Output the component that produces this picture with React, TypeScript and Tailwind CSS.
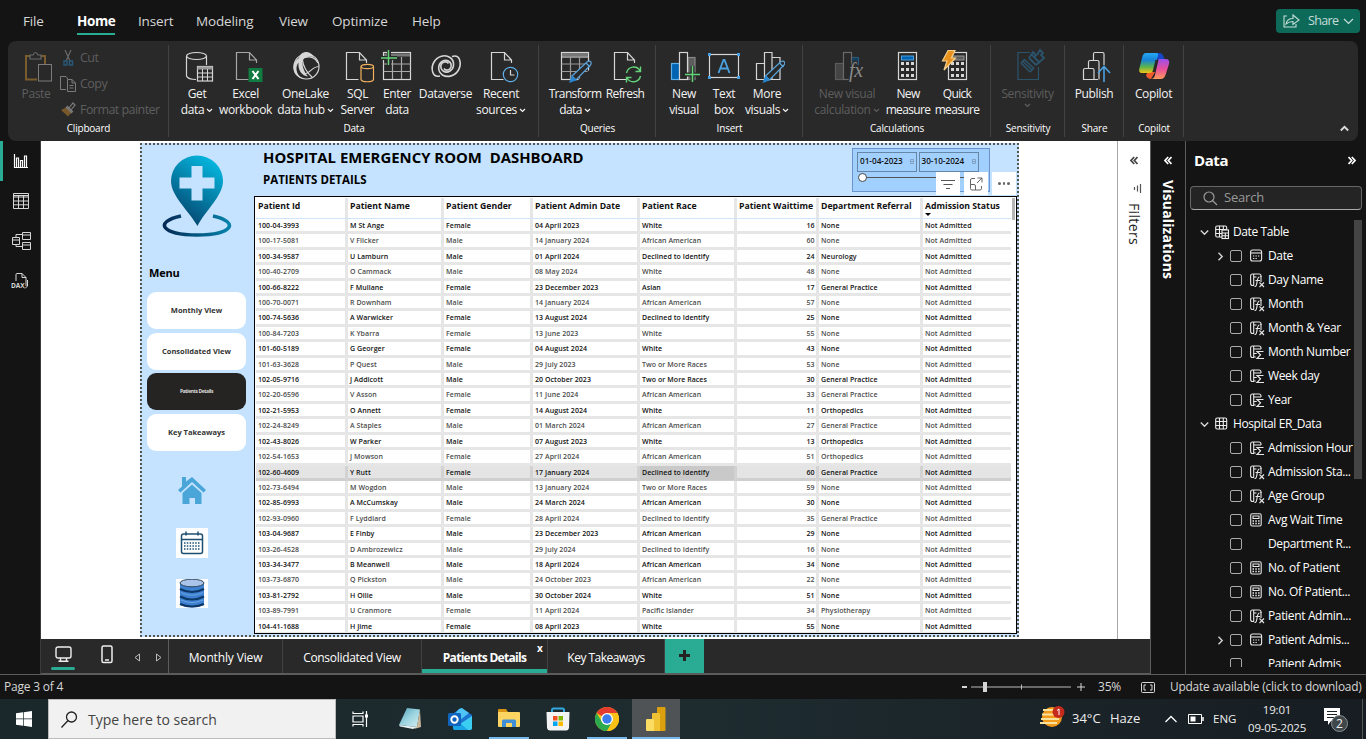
import React from 'react';

type Kids = { children?: React.ReactNode };

/* ---------- ribbon icons (36x36 canvas) ---------- */
const Svg36 = ({ children }: Kids) => (
  <svg width="36" height="36" viewBox="0 0 36 36" fill="none" stroke="#d6d6d6" strokeWidth="1.2" className="shrink-0">{children}</svg>
);
const PageShape = ({ x, color = '#d6d6d6' }: { x: number; color?: string }) => (
  <path stroke={color} d={`M${x + 20} 15V12L${x + 13} 4.5H${x}V31.5H${x + 12}M${x + 13} 4.5V12H${x + 20}`} />
);
const Pencil = ({ x }: { x: number }) => (
  <g transform={`translate(${x} 0)`}>
    <path stroke="#5aa5dc" fill="#292929" d="M2 28L17.5 13.5Q20 12.5 21 14Q21.500 16 20.500 17L6 32Z" />
    <path stroke="#5aa5dc" d="M16 15l4 4" />
    <path stroke="#2a86d0" fill="#2a86d0" d="M2 28.500L5.500 32L0 34Z" />
  </g>
);
const CalcShape = ({ x }: { x: number }) => (
  <g>
    <rect x={x + 0.5} y="4.500" width="18" height="27" />
    <g fill="#d6d6d6" stroke="none">
      {[14, 20, 26].map((y) => [3, 8, 13].map((dx) => <rect key={`${y}-${dx}`} x={x + dx} y={y} width="3" height="3" />))}
    </g>
  </g>
);

const GetDataIcon = () => (
  <Svg36>
    <ellipse cx="17.500" cy="8" rx="10" ry="3.500" />
    <path d="M7.500 8V28Q9 31.500 17 31.500M27.500 8V17" />
    <rect x="18.500" y="18.500" width="15" height="14.500" fill="#292929" />
    <path d="M18.500 20h15" strokeWidth="3" stroke="#9a9a9a" />
    <path d="M18.500 25h15M18.500 29h15M23.500 21v12M28.500 21v12" strokeWidth="1" />
  </Svg36>
);
const ExcelIcon = () => (
  <Svg36>
    <PageShape x={8.5} color="#a6a6a6" />
    <rect x="20.500" y="20" width="14" height="14" fill="#107c41" stroke="none" />
    <path stroke="#fff" strokeWidth="2" d="M24.500 23l6 8M30.500 23l-6 8" />
  </Svg36>
);
const OneLakeIcon = () => (
  <Svg36>
    <circle cx="18.500" cy="18.500" r="12.500" />
    <path fill="#d6d6d6" stroke="none" d="M11 10C13 2.500 22 2 26 9C21 7.500 17 9 15 12C13.500 17 16 24 20 28.500C14 28 9.500 22 10.500 14.500C7 19 8 26 14 30.500C4 28 2.500 15 11 10Z" />
    <path d="M14.500 12C15 18 19 25 24 29M17 26C22 25 24 19 30.500 18.500M17 9.500C22 7.500 28 10 30 15" />
  </Svg36>
);
const SqlIcon = () => (
  <Svg36>
    <PageShape x={6.5} />
    <path fill="#292929" stroke="#f2b05e" d="M21 19V31.500C22 34.500 32.500 34.500 33.500 31.500V19Z" />
    <ellipse cx="27.300" cy="18.500" rx="6.200" ry="2.200" stroke="#f2b05e" fill="#292929" />
  </Svg36>
);
const EnterDataIcon = () => (
  <Svg36>
    <rect x="4.500" y="4.500" width="27" height="27" />
    <path d="M5 7h26" stroke="#777" strokeWidth="3" />
    <path d="M4.500 16h27M4.500 23.500h27M13.500 9v22M22.500 9v22" stroke="#aaa" />
    <path d="M3 10h15M10 1v17" stroke="#292929" strokeWidth="4" />
    <path d="M2 10h16M9.500 2v15" stroke="#63d47a" strokeWidth="1.500" />
  </Svg36>
);
const DataverseIcon = () => (
  <Svg36>
    <g strokeWidth="1.600">
      <path d="M12 28C4 30 2.500 20 6 14C9.500 8 17 6 22 9.500C27 13 26.500 20 22 23C17 26 12 22 13 17C14 13.500 19 13 20.500 15.500" />
      <path d="M24 8.500C32 6 34 15 30.500 22C27 28 19.500 30 14.500 27C9.500 23.500 9.500 17 14 13.500C19 10.500 24 14 23 19C22 22.500 17.500 23 16 20.500" />
    </g>
  </Svg36>
);
const RecentIcon = () => (
  <Svg36>
    <PageShape x={8.5} />
    <circle cx="27.500" cy="26.500" r="7.200" stroke="#5fb0ea" fill="#292929" />
    <path d="M27.500 22v5h4" />
  </Svg36>
);
const TransformIcon = () => (
  <Svg36>
    <rect x="4.500" y="4.500" width="27" height="27" />
    <path d="M5 6.500h26" stroke="#777" strokeWidth="3" />
    <path d="M5 9h27" />
    <path d="M4.500 16h27M4.500 23.500h27M13.500 9v22M22.500 9v22" stroke="#999" />
    <path d="M22 32L33 22V33Z" fill="#292929" stroke="#292929" />
    <Pencil x={13} />
  </Svg36>
);
const RefreshIcon = () => (
  <Svg36>
    <PageShape x={7.5} />
    <circle cx="26.500" cy="26.500" r="8.500" fill="#292929" stroke="none" />
    <path stroke="#63d47a" strokeWidth="1.400" d="M19.500 25C21 18 30 17 33 23M33.500 18.500V23.500H28.500M33.500 28C32 35 23 35.500 20 30M19.500 34.500V29.500H24.500" />
  </Svg36>
);
const NewVisualIcon = () => (
  <Svg36>
    <rect x="5.500" y="15.500" width="8" height="16" fill="#0063b1" stroke="#5fb0ea" />
    <rect x="22" y="9.500" width="7" height="22" fill="#5c5c5c" stroke="#888" />
    <rect x="13.500" y="4.500" width="8" height="27" fill="#292929" />
    <path d="M18 26.500h16M26.500 18v17" stroke="#292929" strokeWidth="4" />
    <path d="M19 26.500h15M26.500 18v16" stroke="#63d47a" strokeWidth="1.500" />
  </Svg36>
);
const TextBoxIcon = () => (
  <Svg36>
    <rect x="3.500" y="6.500" width="29" height="23" />
    <path d="M12.500 25L17.500 12H18.500L23.500 25M14.300 20.500h7.500" stroke="#4ba0e0" strokeWidth="1.800" />
    <path d="M2 5h3v3H2zM31 5h3v3h-3zM2 28h3v3H2zM31 28h3v3h-3z" fill="#4ba0e0" stroke="none" />
  </Svg36>
);
const MoreVisualsIcon = () => (
  <Svg36>
    <path d="M7.500 31.500V15.500H15.500V31.500ZM15.500 31.500V4.500H23V31.500ZM23 9.500H31V31.500H23" />
    <Pencil x={14.5} />
  </Svg36>
);
const VisualCalcIcon = () => (
  <Svg36>
    <rect x="6.500" y="15.500" width="8" height="16" fill="#444" stroke="#5c5c5c" />
    <rect x="22" y="9.500" width="7.500" height="7" fill="#173c57" stroke="#295878" />
    <rect x="14.500" y="4.500" width="8" height="27" stroke="#6a6a6a" fill="#292929" />
    <text x="20" y="29" fill="#8a8a8a" stroke="#292929" strokeWidth="2" paintOrder="stroke" className="font-['Liberation_Serif',serif] text-[20px] italic">fx</text>
  </Svg36>
);
const NewMeasureIcon = () => (
  <Svg36>
    <CalcShape x={8} />
    <rect x="11.500" y="8" width="12" height="4" fill="#0063b1" stroke="#4ba0e0" strokeWidth="1" />
  </Svg36>
);
const QuickMeasureIcon = () => (
  <Svg36>
    <CalcShape x={9} />
    <rect x="13" y="8" width="12" height="4" fill="#5c5c5c" stroke="#999" strokeWidth="1" />
    <path d="M9 2.500H16L12.500 10H16.500L5 22L8 13H3.500Z" fill="#e8921d" stroke="#f7d08a" strokeWidth="1.200" />
  </Svg36>
);
const SensitivityIcon = () => (
  <Svg36>
    <g stroke="#2b536c">
      <path d="M20 4.500H8V31.500H28.500V19" />
      <path d="M11 15L20 24M12.500 13L22 22M14.500 11.500L24 20.500M11 15l3.500-3.500M20 24l4-4" strokeWidth="1.600" />
      <path d="M19 10l7 7M21 6l9 9M19 10l4-6 3 3-2 3M26 17l8-7-3-3 2-2-3-3-3 5" strokeWidth="1.800" />
    </g>
  </Svg36>
);
const PublishIcon = () => (
  <Svg36>
    <path d="M22 31.500H7.500V22Q7.500 20.500 9 20.500H16.500Q18 20.500 18 22V31.500M12.500 20V14Q12.500 12.500 14 12.500H21.500Q23 12.500 23 14V31.500M17.500 12V6Q17.500 4.500 19 4.500H26.500Q28 4.500 28 6V17" />
    <path d="M28 34V19M22 25L28 18.500L34 25" stroke="#4ba0e0" strokeWidth="1.600" />
  </Svg36>
);
const CopilotIcon = () => (
  <Svg36>
    <defs>
      <linearGradient id="cpA" x1="0" y1="0" x2="0" y2="1"><stop offset="0" stopColor="#25a9f4" /><stop offset=".35" stopColor="#1783d8" /><stop offset=".7" stopColor="#5cb54c" /><stop offset="1" stopColor="#f6c416" /></linearGradient>
      <linearGradient id="cpB" x1="0" y1="0" x2="0" y2="1"><stop offset="0" stopColor="#9a4fea" /><stop offset=".5" stopColor="#e94f9c" /><stop offset="1" stopColor="#fb9a5a" /></linearGradient>
    </defs>
    <g stroke="none">
      <path d="M18 5H24Q27 5.500 28 10L29 12H22Z" fill="#1547c8" />
      <path d="M12 24H19L15 31Q11 31 10 27Z" fill="#ee5a2c" />
      <path d="M10 5H20Q23 5 22 8L18 21Q17 25 13 25H6Q2 25 3.500 20L6 10Q7 5 10 5Z" fill="url(#cpA)" />
      <path d="M23 11H30Q34 11 33 16L29.500 27Q28 31 25 31H15Q18 31 19 27L22 14Q22.500 11 23 11Z" fill="url(#cpB)" />
      <path d="M19.500 12H22L18.500 24H16.500Z" fill="#292929" />
    </g>
  </Svg36>
);

const Caret = ({ className = '' }: { className?: string }) => (
  <svg width="7" height="5" viewBox="0 0 7 5" fill="none" stroke="currentColor" strokeWidth="1.200" className={`inline-block ${className}`}><path d="M1 1l2.500 2.500L6 1" /></svg>
);

type BtnProps = { icon: React.ReactNode; a: string; b?: string; caret?: boolean; w: string; off?: boolean; tight?: boolean };
const Btn = ({ icon, a, b, caret, w, off, tight }: BtnProps) => (
  <div className={`flex ${w} shrink-0 flex-col items-center ${tight ? 'tracking-[-0.650px]' : 'tracking-[-0.350px]'} ${off ? 'text-[#5e5e5e]' : 'text-[#f3f3f3]'}`}>
    {icon}
    <span className="mt-[1.500px] whitespace-nowrap text-[12px] leading-4">{a}</span>
    <span className="flex items-center gap-[2px] whitespace-nowrap text-[12px] leading-4">{b}{caret && <Caret className="mt-px" />}</span>
  </div>
);
const Group = ({ w, label, pad = '', children }: { w: string; label: string; pad?: string } & Kids) => (
  <div className={`relative flex h-full ${w} shrink-0 flex-col`}>
    <div className={`flex h-[76px] pt-[7px] ${pad}`}>{children}</div>
    <div className="mt-[3px] text-center text-[10px] font-medium leading-4 tracking-[-0.200px] text-white">{label}</div>
    <div className="absolute right-0 top-1 h-[92px] w-px bg-[#424242]" />
  </div>
);

const Ribbon = () => (
  <div className="mx-2 flex h-[100px] w-[1350px] shrink-0 rounded-lg bg-[#292929]">
    <Group w="w-[161px]" label="Clipboard" pad="pl-3">
      <div className="flex w-8 flex-col items-center text-[#5e5e5e]">
        <svg width="32" height="36" viewBox="0 0 32 36" fill="none">
          <path d="M10 8H6V31.500H17M21 8h4v8" stroke="#7b5c2c" strokeWidth="2" />
          <path d="M10 11V7H13Q15.500 2 18 7H21V11Z" stroke="#6a6a6a" strokeWidth="1.200" fill="#292929" />
          <rect x="18.500" y="16.500" width="13" height="16.500" stroke="#7b7b7b" fill="#292929" />
        </svg>
        <span className="mt-[1.500px] text-[12px] leading-4 tracking-[-0.350px]">Paste</span>
      </div>
      <div className="-mt-[3px] ml-2 flex shrink-0 flex-col text-[12.500px] tracking-[-0.550px] text-[#5e5e5e]">
        <div className="flex h-[26px] shrink-0 items-center gap-1">
          <svg width="16" height="18" viewBox="0 0 16 18" fill="none"><path d="M5 1l5 11M11 1L6 12" stroke="#6a6a6a" strokeWidth="1.200" /><path d="M4 12h3v4H4zM9.500 12h3v4h-3z" stroke="#295878" strokeWidth="1.500" /></svg>
          Cut
        </div>
        <div className="flex h-[26px] shrink-0 items-center gap-1">
          <svg width="16" height="18" viewBox="0 0 16 18" fill="none" stroke="#7b7b7b"><path d="M6 14.500H.5V1.500H6L8 4M7.500 4.500H12L15.500 8V16.500H7.500ZM12 4.500V8H15.500M9.500 10.500h4M9.500 13h4" /></svg>
          Copy
        </div>
        <div className="flex h-[26px] shrink-0 items-center gap-1">
          <svg width="16" height="18" viewBox="0 0 16 18" fill="none"><path d="M1 9L7 6L12 11L8 15.500Z" fill="#76582b" /><path d="M6 6l6 6M7 5l6 6M9 7l4-5 2 2-4 5" stroke="#7b7b7b" strokeWidth="1.200" /></svg>
          <span className="whitespace-nowrap">Format painter</span>
        </div>
      </div>
    </Group>
    <Group w="w-[370px]" label="Data" pad="pl-[7px]">
      <Btn w="w-[42px]" icon={<GetDataIcon />} a="Get" b="data" caret />
      <Btn w="w-[55px]" icon={<ExcelIcon />} a="Excel" b="workbook" />
      <Btn w="w-[65px]" icon={<OneLakeIcon />} a="OneLake" b="data hub" caret />
      <Btn w="w-[39px]" icon={<SqlIcon />} a="SQL" b="Server" />
      <Btn w="w-10" icon={<EnterDataIcon />} a="Enter" b="data" />
      <Btn w="w-[57px]" icon={<DataverseIcon />} a="Dataverse" />
      <Btn w="w-[54px]" icon={<RecentIcon />} a="Recent" b="sources" caret />
    </Group>
    <Group w="w-[117px]" label="Queries" pad="pl-[6px]">
      <Btn w="w-[60px]" icon={<TransformIcon />} a="Transform" b="data" caret tight />
      <Btn w="w-10" icon={<RefreshIcon />} a="Refresh" tight />
    </Group>
    <Group w="w-[147px]" label="Insert" pad="pl-2">
      <Btn w="w-10" icon={<NewVisualIcon />} a="New" b="visual" />
      <Btn w="w-10" icon={<TextBoxIcon />} a="Text" b="box" />
      <Btn w="w-[46px]" icon={<MoreVisualsIcon />} a="More" b="visuals" caret />
    </Group>
    <Group w="w-[188px]" label="Calculations" pad="pl-2">
      <Btn w="w-[72px]" icon={<VisualCalcIcon />} a="New visual" b="calculation" caret off />
      <Btn w="w-[50px]" icon={<NewMeasureIcon />} a="New" b="measure" tight />
      <Btn w="w-12" icon={<QuickMeasureIcon />} a="Quick" b="measure" tight />
    </Group>
    <Group w="w-[74px]" label="Sensitivity"><Btn w="w-[73px]" icon={<SensitivityIcon />} a="Sensitivity" b="" caret off /></Group>
    <Group w="w-[59px]" label="Share"><Btn w="w-[58px]" icon={<PublishIcon />} a="Publish" /></Group>
    <Group w="w-[60px]" label="Copilot"><Btn w="w-[59px]" icon={<CopilotIcon />} a="Copilot" /></Group>
    <div className="flex flex-1 items-end justify-end pb-[9px] pr-[9px]">
      <svg width="9" height="7" viewBox="0 0 9 7" fill="none" stroke="#ddd" strokeWidth="1.800"><path d="M.8 5.500L4.500 1.800L8.200 5.500" /></svg>
    </div>
  </div>
);

const menus: [string, string][] = [
  ['File', 'w-[54px]'], ['Home', 'w-[61px]'], ['Insert', 'w-[58px]'], ['Modeling', 'w-[83px]'], ['View', 'w-[53px]'], ['Optimize', 'w-[80px]'], ['Help', 'w-12'],
];
const MenuBar = () => (
  <div className="flex h-[41px] shrink-0 items-start justify-between pl-[23px] pr-[6px] text-[13.500px] text-[#d6d6d6]">
    <div className="flex pt-[11px]">
      {menus.map(([m, w]) => (
        <div key={m} className={`${w} flex flex-col items-start leading-5`}>
          {m === 'Home'
            ? <span className="flex h-6 flex-col border-b-2 border-[#2aac94] font-bold tracking-[-0.400px] text-white">{m}</span>
            : <span className="tracking-[-0.150px]">{m}</span>}
        </div>
      ))}
    </div>
    <div className="mt-[9px] flex h-6 w-[84px] items-center rounded bg-[#0d6a58] pl-[7px] text-[12.500px] text-[#c5ddd8]">
      <svg width="17" height="16" viewBox="0 0 17 16" fill="none" stroke="#c5ddd8" strokeWidth="1.100"><path d="M4 3H1V14H13V11M3 11Q4 5.500 10 5.500V2L16 7L10 11.500V8.500Q6 8.500 3 11Z" /></svg>
      <span className="ml-2 tracking-[-0.650px]">Share</span>
      <svg width="11" height="7" viewBox="0 0 11 7" fill="none" stroke="#c5ddd8" strokeWidth="1.200" className="ml-[5px]"><path d="M1 1l4.500 4.500L10 1" /></svg>
    </div>
  </div>
);

const LeftRail = () => (
  <div className="flex h-full w-[41px] shrink-0 flex-col border-r border-[#3b3b3b] bg-[#141414] text-[#d8d8d8]">
    <div className="flex h-10 items-center border-l-[3px] border-[#2aac94] pl-[10px]">
      <svg width="16" height="16" viewBox="0 0 16 16" fill="none" stroke="#fff" strokeWidth="1.200"><path d="M1.500 1V14.500H15M3.500 14V5h2v9M7.500 14V7.500h2V14M11.500 14V3h2V14" /></svg>
    </div>
    <div className="flex h-10 items-center pl-[13px]">
      <svg width="16" height="16" viewBox="0 0 16 16" fill="none" stroke="currentColor"><path d="M.5.500h15v15H.5zM.5 4h15M.5 8h15M.5 11.800h15M5.500 3v12M10.500 3v12M.5 2.500h15" /></svg>
    </div>
    <div className="flex h-10 items-center pb-px pl-3">
      <svg width="19" height="19" viewBox="0 0 19 19" fill="none" stroke="currentColor"><path d="M.5 6.500h7v7h-7zM.5 9h7M10.500 1.500h8v7h-8zM10.500 4h8M10.500 11.500h8v7h-8zM10.500 14h8M4 6V3.500h6.500M4 14v1.500h6.500" /></svg>
    </div>
    <div className="flex h-10 items-center pl-[11px]">
      <svg width="19" height="19" viewBox="0 0 19 19" fill="none" stroke="currentColor">
        <path d="M5 9V2.500Q5 1.500 6 1.500H11L15 5.500V14M11 1.500V5.500H15M16.500 8V14L14 16.500" />
        <text x="0" y="16" fill="currentColor" stroke="none" className="text-[6.500px] font-bold">DAX</text>
      </svg>
    </div>
  </div>
);

const rows: string[][] = `100-04-3993|M St Ange|Female|04 April 2023|White|16|None
100-17-5081|V Flicker|Male|14 January 2024|African American|60|None
100-34-9587|U Lamburn|Male|01 April 2024|Declined to Identify|24|Neurology
100-40-2709|O Cammack|Male|08 May 2024|White|48|None
100-66-8222|F Mullane|Female|23 December 2023|Asian|17|General Practice
100-70-0071|R Downham|Male|14 January 2024|African American|57|None
100-74-5636|A Warwicker|Female|13 August 2024|Declined to Identify|25|None
100-84-7203|K Ybarra|Female|13 June 2023|White|55|None
101-60-5189|G Georger|Female|04 August 2024|White|43|None
101-63-3628|P Quest|Male|29 July 2023|Two or More Races|53|None
102-05-9716|J Addicott|Male|20 October 2023|Two or More Races|30|General Practice
102-20-6596|V Asson|Female|11 June 2024|African American|33|General Practice
102-21-5953|O Annett|Female|14 August 2024|White|11|Orthopedics
102-24-8249|A Staples|Male|01 March 2024|African American|27|General Practice
102-43-8026|W Parker|Male|07 August 2023|White|13|Orthopedics
102-54-1653|J Mowson|Female|27 April 2024|African American|51|Orthopedics
102-60-4609|Y Rutt|Female|17 January 2024|Declined to Identify|60|General Practice
102-73-6494|M Wogdon|Male|13 January 2024|Two or More Races|59|None
102-85-6993|A McCumskay|Male|24 March 2024|African American|30|None
102-93-0960|F Lyddiard|Female|28 April 2024|Declined to Identify|35|General Practice
103-04-9687|E Finby|Male|23 December 2023|African American|29|None
103-26-4528|D Ambrozewicz|Male|29 July 2024|Declined to Identify|16|None
103-34-3477|B Meanwell|Male|18 April 2024|African American|34|None
103-73-6870|Q Pickston|Male|24 October 2023|African American|22|None
103-81-2792|H Ollie|Male|30 October 2024|White|51|None
103-89-7991|U Cranmore|Female|11 April 2024|Pacific Islander|34|Physiotherapy
104-41-1688|H Jime|Female|08 April 2023|White|55|None`.split('\n').map((r) => [...r.split('|'), 'Not Admitted']);

const headers = ['Patient Id', 'Patient Name', 'Patient Gender', 'Patient Admin Date', 'Patient Race', 'Patient Waittime', 'Department Referral', 'Admission Status'];
const COLS = 'grid grid-cols-[92px_96px_89px_107px_97px_82px_104px_88px]';

const PatientTable = () => (
  <div className="relative h-[438px] w-[763px] overflow-hidden border border-black bg-white pl-px">
    <div className={`${COLS} h-[22px] w-[755px] border-b border-[#cfe5fa] pt-px`}>
      {headers.map((h, i) => (
        <div key={h} className={`relative whitespace-nowrap pl-[2px] pt-[3px] text-[8.700px] font-bold leading-[11px] text-[#111] ${i < 7 ? 'border-r-[3px] border-[#e6e6e6]' : ''}`}>
          {h}
          {i === 7 && <div className="absolute left-[2px] top-[15px] border-x-[3px] border-t-[3px] border-x-transparent border-t-black" />}
        </div>
      ))}
    </div>
    {rows.map((r, ri) => (
      <div key={r[0]} className={`${COLS} h-[15.420px] w-[755px] ${ri === 16 ? 'border-b-[3px] border-[#cfcfcf] bg-[#e4e4e4]' : 'border-b-[3px] border-[#e6e6e6]'}`}>
        {r.map((c, ci) => (
          <div
            key={ci}
            className={`whitespace-nowrap pl-[2px] text-[7px] font-semibold leading-[14px] tracking-[0.060px] ${ri % 2 ? 'text-[#4c4c4c]' : 'text-[#111]'} ${ci < 7 ? 'border-r-[3px]' : ''} ${ri === 16 ? 'border-[#d2d2d2]' : 'border-[#e6e6e6]'} ${ri === 16 && ci === 4 ? 'bg-[#c9c9c9]' : ''} ${ci === 5 ? 'pr-[1.500px] text-right' : ''}`}
          >
            {c}
          </div>
        ))}
      </div>
    ))}
    <div className="absolute right-px top-px h-[22px] w-[3px] bg-[#b5b5b5]" />
  </div>
);

const NavButton = ({ label, active }: { label: string; active?: boolean }) => (
  <div className={`flex h-[37px] w-[99px] items-center justify-center rounded-[9px] ${active ? 'bg-[#252423]' : 'bg-white'}`}>
    <span className={active ? 'text-[5px] font-bold tracking-[-0.400px] text-[#ddd]' : 'text-[7.500px] font-bold text-[#333]'}>{label}</span>
  </div>
);

const SideNav = () => (
  <div className="flex w-[112px] shrink-0 flex-col pl-[5px]">
    <svg width="72" height="86" viewBox="0 0 72 86" className="ml-[14px] mt-2" fill="none">
      <defs>
        <linearGradient id="pin" x1=".8" y1="0" x2=".3" y2="1"><stop offset="0" stopColor="#06bce4" /><stop offset=".5" stopColor="#0480a8" /><stop offset="1" stopColor="#05426c" /></linearGradient>
        <linearGradient id="ring" x1="0" y1="0" x2="1" y2="0"><stop offset="0" stopColor="#052a55" /><stop offset="1" stopColor="#0683ab" /></linearGradient>
      </defs>
      <path d="M36.500 73C28 58 10 43 10 28A26 25.500 0 0 1 62 28C62 43 44 58 36.500 73Z" fill="url(#pin)" />
      <path d="M30.500 13h11v11.500h12v11h-12v12h-11v-12h-12v-11h12z" fill="#c5e3ff" />
      <path d="M20 63C-8 69 1 82 36 82C72 82 79 69 52 63" stroke="url(#ring)" strokeWidth="3.500" />
    </svg>
    <div className="ml-[2px] mt-[26px] text-[11px] font-bold leading-4 tracking-[-0.200px] text-black">Menu</div>
    <div className="mt-[11px] flex flex-col gap-[3.700px]">
      <NavButton label="Monthly View" />
      <NavButton label="Consolidated View" />
      <NavButton label="Patients Details" active />
      <NavButton label="Key Takeaways" />
    </div>
    <svg width="28" height="28" viewBox="0 0 28 28" className="ml-[31px] mt-[26px]"><path d="M4 0H8V4.500L14 0L28 13L25.500 15.500L14 5L2.500 15.500L0 13L4 9.500Z" fill="#4aa6d9" /><path d="M4.500 16L14 7.500L23.500 16V27H17V21H11.500V27H4.500Z" fill="#4aa6d9" /></svg>
    <div className="ml-[29px] mt-[23px] flex h-[30px] w-8 items-center justify-center bg-white">
      <svg width="24" height="24" viewBox="0 0 24 24" fill="none" stroke="#1d4f72" strokeWidth="1.500"><rect x="1.500" y="3" width="21" height="19.500" rx="2" /><path d="M1.500 8.500h21M6 .5v4M18 .5v4" /><path d="M4 12h16M4 15h16M4 18h16" strokeDasharray="1.500 1.300" /></svg>
    </div>
    <div className="ml-[29px] mt-[21px] flex h-[29px] w-8 justify-center bg-white">
      <svg width="26" height="29" viewBox="0 0 26 29" fill="none"><path d="M1 4H25V26Q13 31 1 26Z" fill="#3d80cf" /><path d="M1 10Q13 16 25 10M1 17.500Q13 23.500 25 17.500M1 25Q13 30 25 25" stroke="#0d3767" strokeWidth="2.200" /><ellipse cx="13" cy="4" rx="12" ry="3.800" fill="#a9c4e8" stroke="#31465e" /><path d="M2 13.500Q13 19 24 13.500M2 21Q13 26 24 21" stroke="#6aa4e6" /></svg>
    </div>
  </div>
);

const DateBox = ({ v }: { v: string }) => (
  <div className="flex h-5 w-[60px] items-center justify-between border border-[#6586a6] pl-[2px] pr-[2px] text-[8.200px] font-semibold text-[#111]">
    <span>{v}</span>
    <svg width="4" height="5" viewBox="0 0 4 5" fill="none" stroke="#7d9dbd" strokeWidth="0.900"><path d="M.5.500h3v4h-3zM.5 2.500h3" /></svg>
  </div>
);

const DateSlicer = () => (
  <div className="relative h-[44px] w-[138px] border border-[#6c93cf] bg-[#a1d0ff] pl-1 pt-[2.500px]">
    <div className="flex gap-[1.500px]"><DateBox v="01-04-2023" /><DateBox v="30-10-2024" /></div>
    <div className="absolute left-[9px] top-[28px] h-px w-[112px] bg-[#555]" />
    <div className="absolute left-[5px] top-[24px] h-[9px] w-[9px] rounded-full border border-[#444] bg-white" />
    <div className="absolute left-[83px] top-[23px] flex gap-1">
      <div className="flex h-[23px] w-6 items-center justify-center bg-white"><svg width="14" height="10" viewBox="0 0 14 10" stroke="#555"><path d="M0 1.500h14M2.500 5.500h9M5 9.500h4" /></svg></div>
      <div className="flex h-[23px] w-6 items-center justify-center bg-white"><svg width="14" height="14" viewBox="0 0 14 14" fill="none" stroke="#666"><path d="M6 1.500H3Q1.500 1.500 1.500 3V11.500Q1.500 13 3 13H11Q12.500 13 12.500 11.500V9M8.500 1h4.500v4.500M13 1L8 6M1.500 7.500H5Q6.500 7.500 6.500 9V13" /></svg></div>
      <div className="flex h-[23px] w-6 items-center justify-center gap-[2px] bg-white"><i className="h-[2.500px] w-[2.500px] rounded-full bg-[#666]" /><i className="h-[2.500px] w-[2.500px] rounded-full bg-[#666]" /><i className="h-[2.500px] w-[2.500px] rounded-full bg-[#666]" /></div>
    </div>
  </div>
);

const ReportPage = () => (
  <div className="ml-[99px] mt-[2px] flex h-[494px] w-[879px] border-2 border-dotted border-[#555] bg-[#c5e3ff]">
    <SideNav />
    <div className="flex flex-1 flex-col">
      <div className="flex h-[51px] justify-between pl-[9px] pr-[27px] text-black">
        <div className="pt-[2px]">
          <div className="whitespace-pre text-[14.900px] font-bold leading-5">HOSPITAL EMERGENCY ROOM  DASHBOARD</div>
          <div className="mt-[5px] text-[11.500px] font-bold leading-4">PATIENTS DETAILS</div>
        </div>
        <div className="z-10 pt-[3px]"><DateSlicer /></div>
      </div>
      <PatientTable />
    </div>
  </div>
);

const PageTabs = () => (
  <div className="flex h-[35px] shrink-0 border-b border-[#5c5c5c] bg-[#292929] text-[12px] tracking-[-0.150px] text-white">
    <div className="flex w-[128px] shrink-0 border-r border-[#5c5c5c]">
      <div className="flex w-[44px] flex-col items-center pt-[7px]">
        <svg width="17" height="17" viewBox="0 0 17 17" fill="none" stroke="#eee" strokeWidth="1.400"><rect x="1" y="1" width="15" height="11" rx="2" /><path d="M5.500 12v3M11.500 12v3M3.500 15.300h10" /></svg>
        <div className="mt-1 h-[3px] w-6 rounded bg-[#2aac94]" />
      </div>
      <svg width="12" height="19" viewBox="0 0 12 19" fill="none" stroke="#eee" strokeWidth="1.500" className="ml-4 mt-[6px]"><rect x="1" y="1" width="10" height="16.500" rx="1.500" /><path d="M4 15h4" /></svg>
      <svg width="6" height="9" viewBox="0 0 6 9" fill="none" stroke="#bbb" className="ml-[21px] mt-[14px]"><path d="M5.500 1v7L1 4.500Z" /></svg>
      <svg width="6" height="9" viewBox="0 0 6 9" fill="none" stroke="#bbb" className="ml-4 mt-[14px]"><path d="M.5 1v7L5 4.500Z" /></svg>
    </div>
    <div className="flex w-[114px] shrink-0 items-center justify-center border-r border-[#424242] pt-[3px]">Monthly View</div>
    <div className="flex w-[139px] shrink-0 items-center justify-center border-r border-[#424242] pt-[3px] tracking-[-0.300px]">Consolidated View</div>
    <div className="relative flex w-[125px] shrink-0 items-center justify-center border-b-4 border-[#2aac94] pt-[7px] font-bold tracking-[-0.700px]">
      Patients Details
      <span className="absolute right-[5px] top-[3px] text-[10px] leading-3">x</span>
    </div>
    <div className="flex w-[118px] shrink-0 items-center justify-center border-x border-[#424242] pt-[3px] tracking-[-0.500px]">Key Takeaways</div>
    <div className="flex w-[39px] shrink-0 items-center justify-center bg-[#2aac94] pb-px">
      <svg width="11" height="11" viewBox="0 0 11 11" stroke="#252423" strokeWidth="3"><path d="M5.500 0v11M0 5.500h11" /></svg>
    </div>
  </div>
);

const Dbl = ({ color, right }: { color: string; right?: boolean }) => (
  <svg width="8" height="9" viewBox="0 0 8 9" fill="none" stroke={color} strokeWidth="1.700" className={right ? 'rotate-180' : ''}><path d="M4.200 1L1 4.500L4.200 8M7.500 1L4.300 4.500L7.500 8" /></svg>
);

const FiltersPane = () => (
  <div className="flex h-[498px] w-[33px] flex-col items-center border-l border-[#a8a8a8] bg-white pt-[15px]">
    <Dbl color="#444" />
    <svg width="9" height="9" viewBox="0 0 9 9" fill="none" stroke="#555" strokeWidth="1.200" className="ml-[7px] mt-[19px] shrink-0"><path d="M7.500 0v9M4.500 1.500v6M1.500 3v3" /></svg>
    <div className="mt-[10px] text-[14px] font-medium leading-5 tracking-[0.350px] text-[#252423] [writing-mode:vertical-rl]">Filters</div>
  </div>
);

const VizPane = () => (
  <div className="flex h-full w-9 shrink-0 flex-col items-center border-x border-[#5c5c5c] bg-[#141414] pt-[15px] text-white">
    <Dbl color="#fff" />
    <div className="mt-[15px] whitespace-nowrap text-[14px] font-bold leading-5 tracking-[0.150px] [writing-mode:vertical-rl]">Visualizations</div>
  </div>
);

type FieldKind = 'date' | 'fx' | 'sum' | 'calc' | 'none';
const FieldIcon = ({ kind }: { kind: FieldKind }) => (
  <svg width="15" height="15" viewBox="0 0 15 15" fill="none" stroke="#e8e8e8" strokeWidth="1.100" className="shrink-0">
    {kind === 'date' && <><rect x=".6" y="1" width="11" height="11" rx="2" /><path d="M.6 4h11" /><path d="M3 7h6.500M3 9.500h4.500" strokeDasharray="1.300 1.200" /></>}
    {kind === 'calc' && <><rect x=".7" y=".7" width="10.500" height="12.300" rx="1.500" /><path d="M3 3h6v2.500H3z" /><path d="M2.500 8h7.500M2.500 10.500h7.500" strokeDasharray="1.500 1.300" strokeWidth="1.500" /></>}
    {(kind === 'fx' || kind === 'sum') && <path d="M4 12.500H2.500Q.6 12.500 .6 10.500V3Q.6 1 2.500 1H9Q11 1 11 3V4M3.700 1V12.500" />}
    {kind === 'fx' && <path d="M3.700 4H6.500M11 3V9M4.500 13.500C8 14.500 6 4 9.500 4M5.500 7.500h4.500M9.500 9.500l4.500 4.500M14 9.500l-4.500 4.500" />}
    {kind === 'sum' && <path d="M3.700 4h7.300M13.500 6.500H7L10.500 9.800L7 13.500H14M3.700 8.500h3M3.700 12h2" strokeWidth="1.200" />}
  </svg>
);
const TreeCaret = ({ open }: { open?: boolean }) => (
  <svg width="9" height="9" viewBox="0 0 9 9" fill="none" stroke="#d6d6d6" strokeWidth="1.400" className="shrink-0"><path d={open ? 'M.8 2.500L4.500 6.200L8.200 2.500' : 'M2.500.8L6.200 4.500L2.500 8.200'} /></svg>
);
const TableRow = ({ label, dbl }: { label: string; dbl?: boolean }) => (
  <div className="flex h-6 shrink-0 items-center pl-[14px]">
    <TreeCaret open />
    <svg width="15" height="15" viewBox="0 0 15 15" fill="none" stroke="#eee" strokeWidth="1.100" className="ml-[6px]">
      <rect x=".7" y="1" width="11" height="11" rx="1.500" /><path d="M.7 4.500h11M.7 8.500h11M4.500 1v11M8.300 1v11" />
      {dbl && <><rect x="7" y="5" width="6.500" height="8.500" fill="#141414" /><path d="M7 8h6.500M7 10.800h6.500M10.300 8v5.500" /></>}
    </svg>
    <span className="ml-[3px] tracking-[-0.400px]">{label}</span>
  </div>
);
const FieldRow = ({ label, kind, open }: { label: string; kind: FieldKind; open?: boolean }) => (
  <div className="flex h-6 shrink-0 items-center pl-[30px]">
    {open ? <TreeCaret /> : <span className="w-[9px]" />}
    <span className="ml-[5px] h-3 w-3 shrink-0 rounded-[2px] border border-[#aaa]" />
    <span className="ml-2 w-[18px]"><FieldIcon kind={kind} /></span>
    <span className="whitespace-nowrap">{label}</span>
  </div>
);

const DataPane = () => (
  <div className="flex h-full flex-1 flex-col text-white">
    <div className="flex h-[45px] items-center justify-between pb-[6px] pl-2 pr-[10px]">
      <span className="text-[15px] font-bold tracking-[-0.400px]">Data</span><Dbl color="#fff" right />
    </div>
    <div className="ml-1 flex h-6 w-[172px] items-center rounded border border-[#666] border-b-[#aaa] bg-[#242424] text-[13px] text-[#9a9a9a]">
      <svg width="15" height="15" viewBox="0 0 15 15" fill="none" stroke="#9a9a9a" strokeWidth="1.200" className="ml-3 mr-[6px]"><circle cx="6" cy="6" r="5" /><path d="M9.500 9.500L14 14" /></svg>
      <span className="tracking-[-0.200px]">Search</span>
    </div>
    <div className="relative mt-[10px] flex h-[447px] flex-col overflow-hidden text-[12px] tracking-[-0.350px]">
      <TableRow label="Date Table" dbl />
      <FieldRow label="Date" kind="date" open />
      <FieldRow label="Day Name" kind="fx" />
      <FieldRow label="Month" kind="fx" />
      <FieldRow label="Month & Year" kind="fx" />
      <FieldRow label="Month Number" kind="sum" />
      <FieldRow label="Week day" kind="sum" />
      <FieldRow label="Year" kind="sum" />
      <TableRow label="Hospital ER_Data" />
      <FieldRow label="Admission Hour" kind="sum" />
      <FieldRow label="Admission Sta..." kind="fx" />
      <FieldRow label="Age Group" kind="fx" />
      <FieldRow label="Avg Wait Time" kind="calc" />
      <FieldRow label="Department R..." kind="none" />
      <FieldRow label="No. of Patient" kind="calc" />
      <FieldRow label="No. Of Patient..." kind="calc" />
      <FieldRow label="Patient Admin..." kind="fx" />
      <FieldRow label="Patient Admis..." kind="date" open />
      <FieldRow label="Patient Admis" kind="none" />
      <div className="absolute right-1 top-0 h-[259px] w-2 bg-[#444]" />
    </div>
  </div>
);

const StatusBar = () => (
  <div className="flex h-6 shrink-0 items-center justify-between bg-[#141414] pl-1 pr-[5px] text-[12px] tracking-[-0.200px] text-[#d6d6d6]">
    <span>Page 3 of 4</span>
    <div className="flex items-center">
      <span className="h-[2px] w-[5px] bg-[#d6d6d6]" />
      <svg width="101" height="12" viewBox="0 0 101 12" stroke="#bbb" className="ml-1"><path d="M0 6h100M50.500 3.500v5" /><rect x="12" y="1" width="4" height="10" fill="#d6d6d6" stroke="none" /></svg>
      <svg width="8" height="8" viewBox="0 0 8 8" stroke="#d6d6d6" className="ml-[5px]"><path d="M4 0v8M0 4h8" /></svg>
      <span className="ml-[13px] w-[43px]">35%</span>
      <svg width="14" height="11" viewBox="0 0 14 11" fill="none" stroke="#d6d6d6"><rect x=".5" y=".5" width="13" height="10" rx="1" /><path d="M5 3H3v5h2M9 3h2v5H9" /></svg>
      <span className="ml-[15px] w-[191px] whitespace-nowrap text-[11.900px] tracking-[-0.200px]">Update available (click to download)</span>
    </div>
  </div>
);

const Slot = ({ w, line, active, children }: { w: string; line?: boolean; active?: boolean } & Kids) => (
  <div className={`relative flex h-full ${w} shrink-0 items-center justify-center ${active ? 'bg-[#505355]' : ''}`}>
    {children}
    {line && <div className={`absolute bottom-0 h-[2px] bg-[#76b9ed] ${active ? 'w-12' : 'w-10'}`} />}
  </div>
);

const Taskbar = () => (
  <div className="flex h-10 shrink-0 bg-linear-to-r from-[#1a282c] via-[#1e2c30] to-[#171d22] text-white">
    <Slot w="w-12"><svg width="16" height="16" viewBox="0 0 16 16" fill="#fff"><path d="M0 2.300L7 1.300V7.600H0zM7.700 1.200L16 0V7.600H7.700zM0 8.300H7V14.700L0 13.700zM7.700 8.300H16V16L7.700 14.800z" /></svg></Slot>
    <div className="flex h-full w-72 items-center border border-[#bbb] bg-[#f1f1f1] pl-3 text-[14px] text-[#444]">
      <svg width="17" height="17" viewBox="0 0 17 17" fill="none" stroke="#222" strokeWidth="1.300"><circle cx="10.500" cy="6" r="5" /><path d="M7 9.500L.5 16.500" /></svg>
      <span className="ml-[10px]">Type here to search</span>
    </div>
    <Slot w="w-[48px]"><svg width="17" height="16" viewBox="0 0 17 16" fill="none" stroke="#fff" strokeWidth="1.200"><path d="M1 .5v2h10v-2M1 15.500v-2h10v2M1 5h10v6H1zM14.500 0v16" /><path d="M13 3.500h3v3h-3z" fill="#fff" stroke="none" /></svg></Slot>
    <Slot w="w-[52px]"><svg width="24" height="24" viewBox="0 0 24 24"><defs><linearGradient id="note" x1="0" y1="0" x2="1" y2="1"><stop offset="0" stopColor="#4f9bb4" /><stop offset=".5" stopColor="#9bd4e0" /><stop offset="1" stopColor="#d5edf0" /></linearGradient></defs><path d="M9 1L22 2.500L19 20L1 18Z" fill="url(#note)" /><path d="M22 3L23 20L16 22L19 19Z" fill="#c9b79b" /><path d="M1 18L19 20L15 22L2 19.500Z" fill="#e8f2f3" /></svg></Slot>
    <Slot w="w-[48px]"><svg width="24" height="24" viewBox="0 0 24 24"><path d="M3 8L13 1L24 8V21Q24 23 22 23H7Q5 23 5 21Z" fill="#1b74d0" /><path d="M11 2L14 1L21 6L12 13L6 8Z" fill="#4ec3f5" /><path d="M24 9L12 17L18 23H22Q24 23 24 21Z" fill="#3ccdf3" /><path d="M5 19L12 16L20 23H7Q5 23 5 21Z" fill="#1aa5e6" /><rect x="0" y="6" width="13" height="13" rx="1.500" fill="#0f64bd" /><circle cx="6.500" cy="12.500" r="3.200" fill="none" stroke="#fff" strokeWidth="1.900" /></svg></Slot>
    <Slot w="w-[50px]" line><svg width="22" height="20" viewBox="0 0 22 20"><path d="M0 1Q0 0 1 0H8L10 3H0Z" fill="#d99414" /><path d="M0 3H21Q22 3 22 4V17Q22 18 21 18H1Q0 18 0 17Z" fill="#fcd462" /><path d="M4 18V12Q4 10.500 5.500 10.500H16.500Q18 10.500 18 12V18H14V14H8V18Z" fill="#3f8fd8" /></svg></Slot>
    <Slot w="w-[48px]"><svg width="24" height="24" viewBox="0 0 24 24"><path d="M6 6V3Q6 1.500 7.500 1.500H16.500Q18 1.500 18 3V6" fill="none" stroke="#31a9e0" strokeWidth="2" /><path d="M.5 5H23.500L23 21Q22.500 23.500 20 23.500H4Q1.500 23.500 1 21Z" fill="#f3f3f3" /><path d="M7 9h4.500v4.500H7z" fill="#f25022" /><path d="M12.500 9H17v4.500h-4.500z" fill="#7fba00" /><path d="M7 14.500h4.500V19H7z" fill="#00a4ef" /><path d="M12.500 14.500H17V19h-4.500z" fill="#ffb900" /></svg></Slot>
    <Slot w="w-[50px]" line><svg width="24" height="24" viewBox="0 0 24 24"><circle cx="12" cy="12" r="12" fill="#fbc116" /><path d="M12 12L1.600 6A12 12 0 0 1 22.400 6Z" fill="#e33b2e" /><path d="M1.600 6A12 12 0 0 0 12 24L17 15L12 12L7 15Z" fill="#2da94f" /><path d="M12 6H22.400A12 12 0 0 1 12 24L17.200 15Z" fill="#fbc116" /><circle cx="12" cy="12" r="6" fill="#fff" /><circle cx="12" cy="12" r="4.700" fill="#3b7ded" /></svg></Slot>
    <Slot w="w-12" line active><svg width="20" height="24" viewBox="0 0 20 24"><rect x="11" y="0" width="8.500" height="24" rx="1" fill="#dca00f" /><path d="M6 7Q6 6 7 6H13Q14 6 14 7V24H6Z" fill="#f0c132" /><path d="M0 13Q0 12 1 12H7Q8 12 8 13V24H1Q0 24 0 23Z" fill="#fadc63" /></svg></Slot>
    <div className="flex flex-1 items-center justify-end text-[13px] text-[#eee]">
      <svg width="26" height="24" viewBox="0 0 26 24" className="mb-1"><circle cx="12" cy="12" r="10" fill="#f39a1c" /><path d="M3 5h13M2 9.500h15M1 14h18M0 18h17" stroke="#fbe29a" strokeWidth="1.800" /><circle cx="18.500" cy="7" r="6" fill="#c42b1c" /><path d="M17 5.500L19 4V10" stroke="#fff" fill="none" /></svg>
      <span className="ml-[6px] w-[38px] whitespace-nowrap">34°C</span>
      <span className="w-[55px]">Haze</span>
      <svg width="12" height="8" viewBox="0 0 12 8" fill="none" stroke="#fff" strokeWidth="1.300"><path d="M.5 7L6 1.500L11.500 7" /></svg>
      <svg width="16" height="10" viewBox="0 0 16 10" fill="none" stroke="#fff" className="ml-[11px]"><path d="M.5.500h13v9H.5z" /><path d="M2.500 2.500h5v5h-5z" fill="#fff" stroke="none" /><path d="M15 3v4" strokeWidth="1.500" /></svg>
      <span className="ml-[9px] w-[36px] text-[11.500px]">ENG</span>
      <div className="flex w-[56px] flex-col items-center text-[11.500px] leading-[18px] tracking-[-0.200px]"><span>19:01</span><span className="whitespace-nowrap">09-05-2025</span></div>
      <div className="relative ml-[19px] mr-[14px] h-[22px] w-6 shrink-0">
        <svg width="24" height="24" viewBox="0 0 24 24"><path d="M0 0H16V13H7L4 17V13H0Z" fill="#fff" /><path d="M3 3.500h10M3 6.500h10M3 9.500h7" stroke="#1b2226" /><circle cx="15.500" cy="15.500" r="8" fill="#40474a" stroke="#8a8f91" /></svg>
        <span className="absolute left-3 top-[7px] text-[12px] leading-[17px]">2</span>
      </div>
      <div className="h-full w-px bg-[#555]" /><div className="w-[3px]" />
    </div>
  </div>
);

export default function App() {
  return (
    <div className="flex h-[739px] w-[1366px] flex-col overflow-hidden bg-[#141414] font-['Open_Sans','Noto_Sans',sans-serif]">
      <MenuBar />
      <Ribbon />
      <div className="flex h-[534px] shrink-0 border-b border-[#5c5c5c]">
        <LeftRail />
        <div className="flex w-[1109px] shrink-0 flex-col">
          <div className="flex h-[498px] shrink-0 overflow-hidden bg-white">
            <div className="w-[1076px] shrink-0"><ReportPage /></div>
            <FiltersPane />
          </div>
          <PageTabs />
        </div>
        <VizPane />
        <DataPane />
      </div>
      <StatusBar />
      <Taskbar />
    </div>
  );
}
